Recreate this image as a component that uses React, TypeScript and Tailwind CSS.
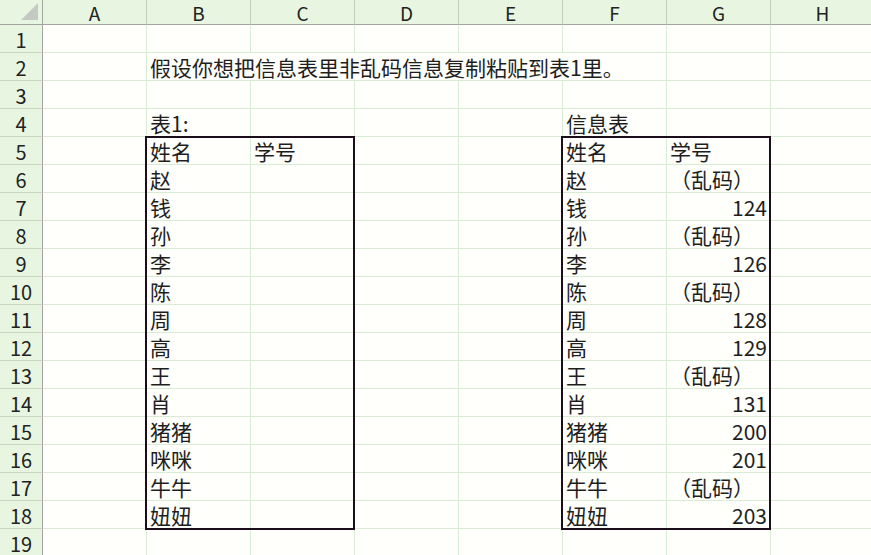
import React from "react";

const COLS = ["A", "B", "C", "D", "E", "F", "G", "H"];

type CellDef = { text: string; align?: "left" | "right"; span?: number };

const names = ["赵", "钱", "孙", "李", "陈", "周", "高", "王", "肖", "猪猪", "咪咪", "牛牛", "妞妞"];
const ids = ["（乱码）", "124", "（乱码）", "126", "（乱码）", "128", "129", "（乱码）", "131", "200", "201", "（乱码）", "203"];

function getCells(row: number): Record<number, CellDef> {
  const r: Record<number, CellDef> = {};
  if (row === 2) r[1] = { text: "假设你想把信息表里非乱码信息复制粘贴到表1里。", span: 5 };
  if (row === 4) {
    r[1] = { text: "表1:" };
    r[5] = { text: "信息表" };
  }
  if (row === 5) {
    r[1] = { text: "姓名" };
    r[2] = { text: "学号" };
    r[5] = { text: "姓名" };
    r[6] = { text: "学号" };
  }
  if (row >= 6 && row <= 18) {
    const i = row - 6;
    r[1] = { text: names[i] };
    r[5] = { text: names[i] };
    const v = ids[i];
    r[6] = { text: v, align: v.startsWith("（") ? "left" : "right" };
  }
  return r;
}

export default function App() {
  const rows = Array.from({ length: 19 }, (_, i) => i + 1);
  return (
    <div
      className="relative w-[871px] h-[555px] overflow-hidden bg-[#fffffb] text-[#1e1e1e]"
      style={{ fontFamily: '"Noto Sans CJK SC", "Noto Sans", sans-serif' }}
    >
      <div className="grid grid-cols-[43px_repeat(8,104px)] grid-rows-[25px_repeat(19,28px)]">
        {/* corner */}
        <div className="relative bg-[#e8f6e1] border-r border-b border-r-[#a3a8a0] border-b-[#a3a3a3]">
          <svg className="absolute left-0 top-0" width="42" height="24" viewBox="0 0 42 24">
            <polygon points="38,3 38,20 21,20" fill="#c5c9c3" />
          </svg>
        </div>
        {COLS.map((c) => (
          <div
            key={c}
            className="flex items-center justify-center bg-[#e8f6e1] border-r border-b border-r-[#c2cfbd] border-b-[#a3a3a3] text-[19px] leading-none text-[#222]"
          >
            {c}
          </div>
        ))}
        {rows.map((row) => {
          const cells = getCells(row);
          const out: React.ReactNode[] = [];
          out.push(
            <div
              key={`h${row}`}
              className="flex items-center justify-center bg-[#e8f6e1] border-r border-b border-r-[#a3a3a3] border-b-[#c8d6c3] text-[20px] leading-none text-[#222] pt-[2px]"
            >
              {row}
            </div>
          );
          let ci = 0;
          while (ci < 8) {
            const cell = cells[ci];
            const span = cell?.span ?? 1;
            out.push(
              <div
                key={`c${row}-${ci}`}
                className={`flex items-end overflow-visible whitespace-nowrap border-r border-b border-[#d8ecd3] text-[21px] leading-[26px] ${
                  cell?.align === "right" ? "justify-end pr-[3px]" : "justify-start pl-[3px]"
                } ${span === 5 ? "col-span-5" : ""}`}
              >
                {cell ? <span>{cell.text}</span> : null}
              </div>
            );
            ci += span;
          }
          return out;
        })}
      </div>
      {/* table borders */}
      <div className="absolute left-[145px] top-[136px] w-[210px] h-[394px] border-2 border-[#1c0c1c] pointer-events-none" />
      <div className="absolute left-[561px] top-[136px] w-[210px] h-[394px] border-2 border-[#1c0c1c] pointer-events-none" />
    </div>
  );
}
